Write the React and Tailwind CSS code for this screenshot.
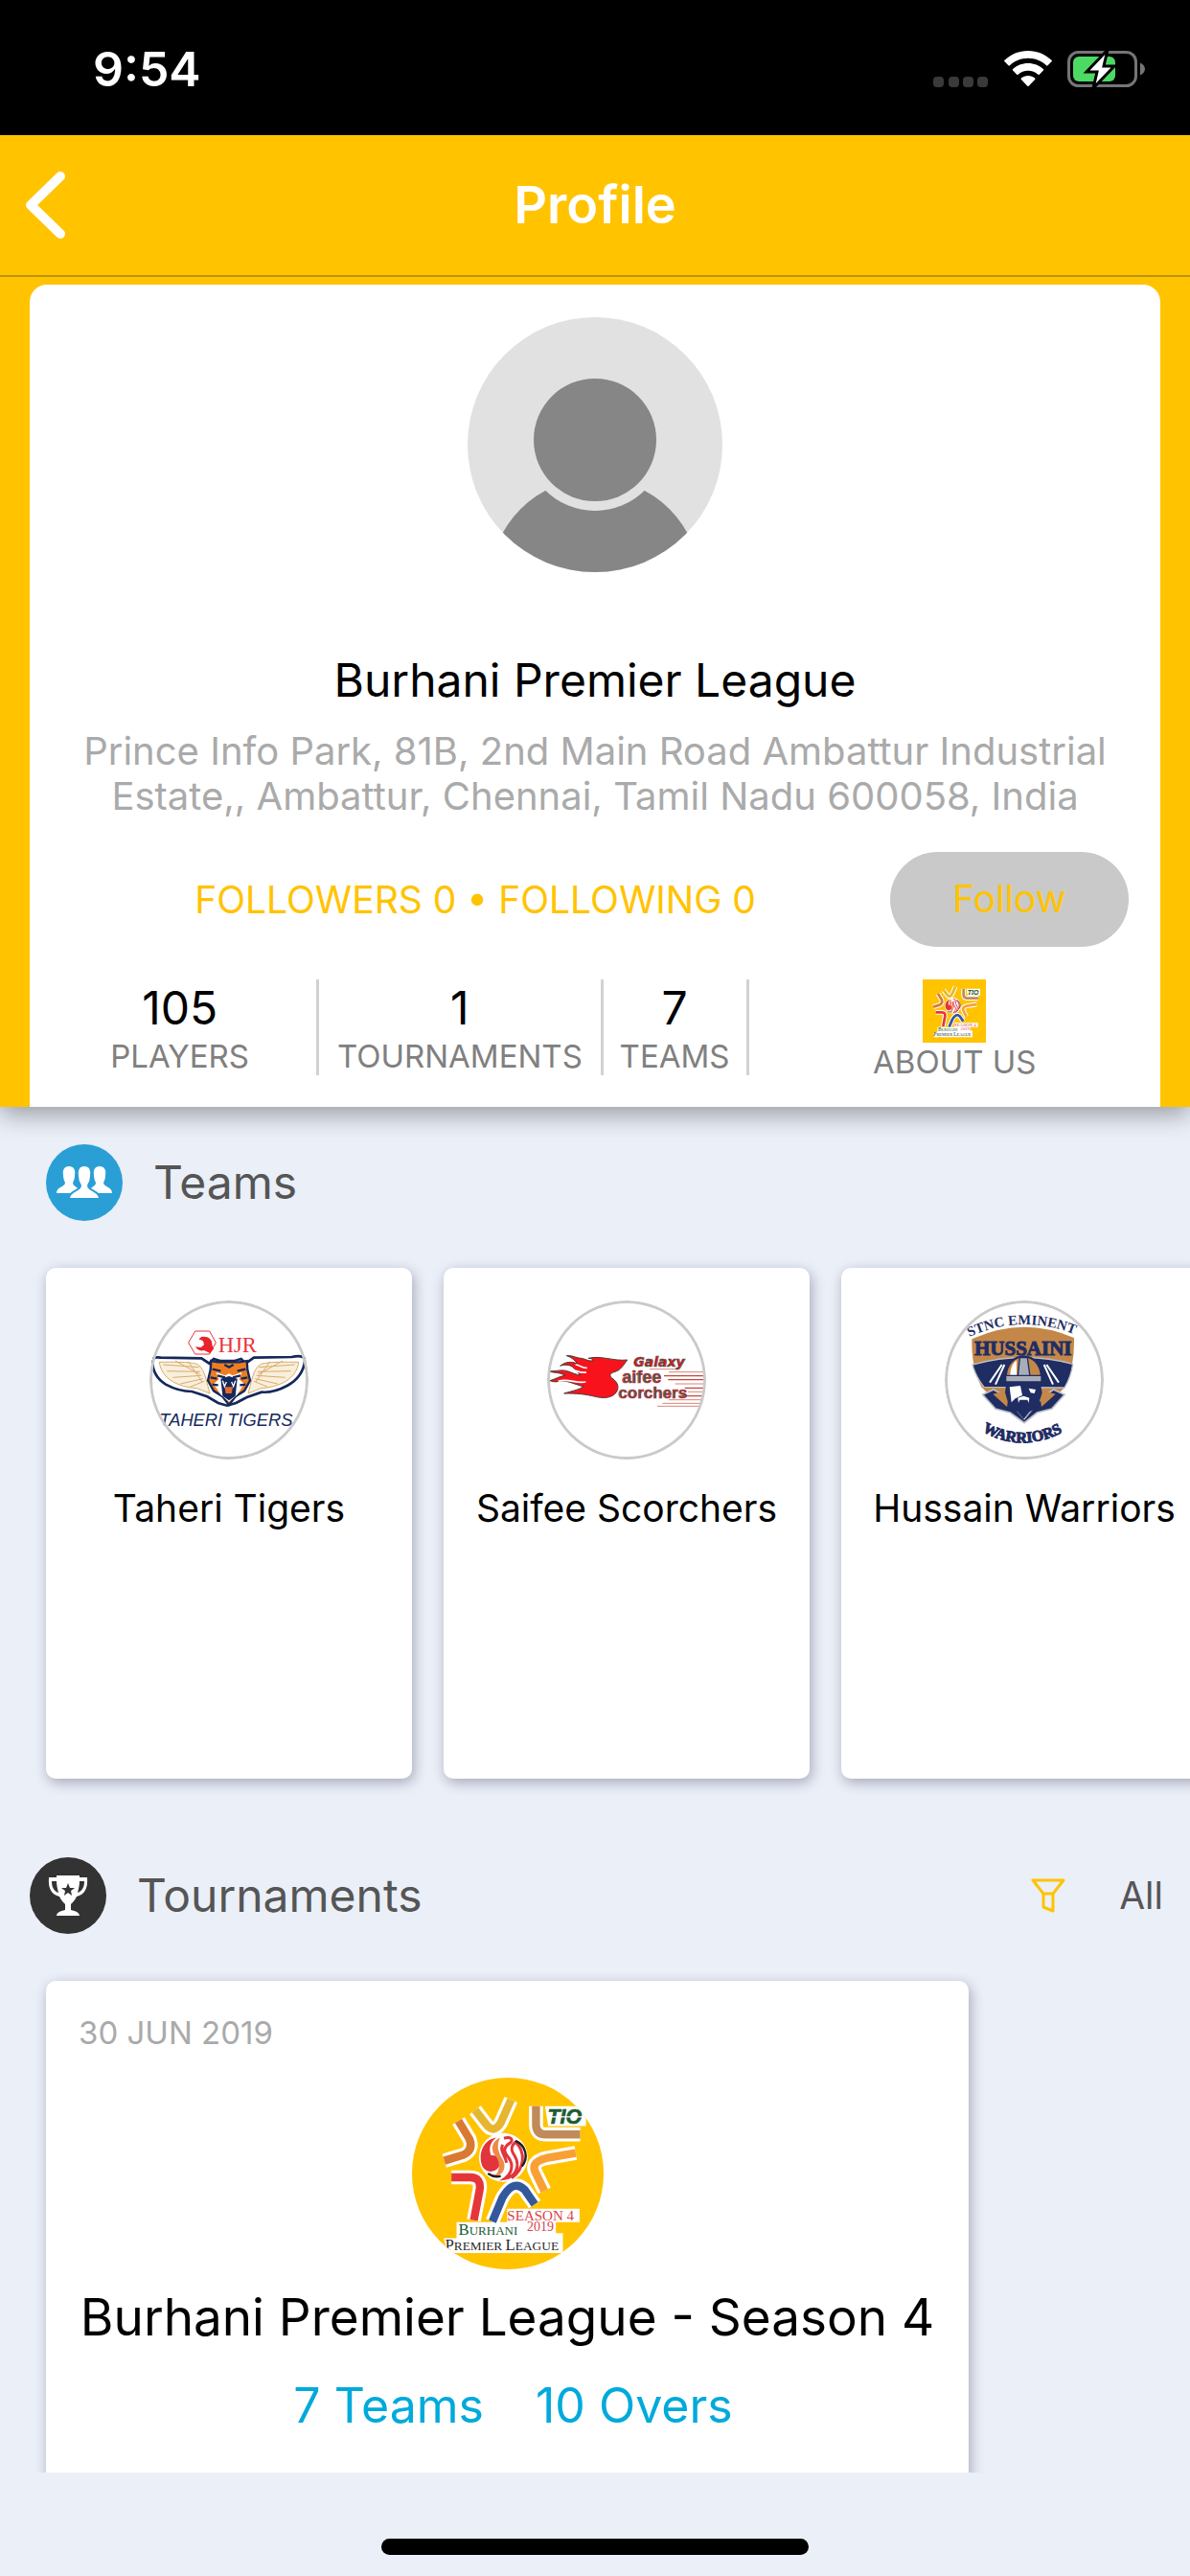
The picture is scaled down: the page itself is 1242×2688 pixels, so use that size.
import { useState } from 'react'

const stats = [
  { value: '105', label: 'PLAYERS' },
  { value: '1', label: 'TOURNAMENTS' },
  { value: '7', label: 'TEAMS' },
]

function StatusBar() {
  return (
    <div className="h-[141px] shrink-0 bg-black text-white flex items-start justify-between pt-10 pl-[97px] pr-[46px]">
      <span className="text-[50px] leading-[64px] font-semibold">9:54</span>
      <div className="flex items-center h-[64px] gap-4">
        <svg width="58" height="38" viewBox="0 0 58 38" fill="#3a3a3a">
          <rect x="0" y="27" width="11" height="11" rx="4" />
          <rect x="16" y="27" width="11" height="11" rx="4" />
          <rect x="31" y="27" width="11" height="11" rx="4" />
          <rect x="46" y="27" width="11" height="11" rx="4" />
        </svg>
        <svg width="50" height="38" viewBox="0 0 50 38" fill="#fff">
          <path d="M25 0C34.500 0 43 3.700 49.500 9.800a1 1 0 0 1 0 1.500L45.500 15.300a1 1 0 0 1-1.400 0C39 10.500 32.300 7.800 25 7.800S11 10.500 5.900 15.300a1 1 0 0 1-1.400 0L.5 11.300a1 1 0 0 1 0-1.500C7 3.700 15.500 0 25 0z" />
          <path d="M25 13C31.200 13 36.700 15.300 40.900 19.100a1 1 0 0 1 0 1.500L36.800 24.700a1 1 0 0 1-1.400 0C32.600 22.200 29 20.700 25 20.700S17.400 22.200 14.600 24.700a1 1 0 0 1-1.400 0L9.100 20.600a1 1 0 0 1 0-1.500C13.300 15.300 18.800 13 25 13z" />
          <path d="M25 26c2.700 0 5.200 1 7.100 2.600a1 1 0 0 1 0 1.500L25.700 36.700a1 1 0 0 1-1.400 0L17.900 30.100a1 1 0 0 1 0-1.500C19.800 27 22.300 26 25 26z" />
        </svg>
        <svg width="82" height="40" viewBox="0 0 82 40">
          <rect x="1.500" y="2.500" width="70" height="35" rx="10" fill="none" stroke="#757575" strokeWidth="3" />
          <path d="M76 13.500c3 1.200 5 3.700 5 6.500s-2 5.300-5 6.500z" fill="#757575" />
          <rect x="6" y="7" width="44" height="26" rx="6" fill="#4cd964" />
          <path d="M42 0L20 23h11l-4 17L49 17H38z" fill="#fff" stroke="#000" strokeWidth="3" />
        </svg>
      </div>
    </div>
  )
}

function TigersLogo() {
  return (
    <svg className="size-full" viewBox="49 51 498 498">
      <path d="M192 147h45l20 36-20 36h-45l-21-36z" fill="#fff" stroke="#e8343b" strokeWidth="3" />
      <path d="M212 165c18-4 34 6 33 24l5 14-12 13-18-9c-12 4-22-2-27-11l17 2 10-8-3-12-14-6z" fill="#e8242e" />
      <text x="264" y="214" fontFamily="'Liberation Serif', serif" fontSize="68" fill="#e8343b">HJR</text>
      <path d="M58 238c2-10 14-10 26-8l128 2 24 16 14-14 20 6h46l20-6 14 14 26-18 118-2c20-4 40-4 42 8-4 42-26 66-56 82-26 14-54 22-80 20l-46 16-34 18-28 8-28-8-34-20-48-16c-28 0-60-10-82-22-26-16-42-40-42-76z" fill="#fff" stroke="#14285a" strokeWidth="8" />
      <path d="M80 244c40 0 86-2 118 6 20 12 26 38 34 70l6 22-40-16c-60-4-112-30-118-82z" fill="#f8efdc" stroke="#d9ab6b" strokeWidth="3" />
      <path d="M516 244c-40 0-86-2-118 6-20 12-26 38-34 70l-6 22 40-16c60-4 112-30 118-82z" fill="#f8efdc" stroke="#d9ab6b" strokeWidth="3" />
      <g fill="none" stroke="#d9ab6b" strokeWidth="3">
        <path d="M92 252l112 8M104 272l104 2M122 292l90-6M146 312l70-16M176 322l44-18M130 240l76 42M170 242l44 64" />
        <path d="M504 252l-112 8M492 272l-104 2M474 292l-90-6M450 312l-70-16M420 322l-44-18M466 240l-76 42M426 242l-44 64" />
      </g>
      <path d="M242 240l22 4h66l24-4 2 28 8 34-18 32-28 18-20 26-20-26-28-18-18-32 8-34z" fill="#ee7d22" stroke="#14285a" strokeWidth="7" />
      <path d="M258 276l28 10 12-6 12 6 28-10-8 22 16 14-22 34-26 22-26-22-22-34 16-14z" fill="#fff" />
      <path d="M246 266l26 6M350 266l-26 6M240 292l20 4M356 292l-20 4M246 314l18 2M350 314l-18 2M284 252l14 8 14-8M262 286l24 6M334 286l-24 6" stroke="#14285a" strokeWidth="7" fill="none" />
      <path d="M272 296l26-8 26 8-6 54-20 14-20-14z" fill="#14285a" />
      <path d="M284 322h26l-4 20h-18z" fill="#e86a2c" />
      <path d="M278 302l6 18 6-14M318 302l-6 18-6-14" stroke="#fff" strokeWidth="4" fill="none" />
      <text x="80" y="444" fontFamily="'Liberation Sans', sans-serif" fontStyle="italic" fontSize="55" fill="#14285a">TAHERI TIGERS</text>
    </svg>
  )
}

function ScorchersLogo() {
  return (
    <svg className="size-full" viewBox="49 51 498 498">
      <g stroke="#c4473a" fill="none">
        <path d="M370 266h90M430 275h115M450 312h95M490 337h55" strokeWidth="2" />
        <path d="M415 287h130M428 299h117M480 325h65M470 350h70" strokeWidth="4" />
        <path d="M430 362h110M410 373h126M394 382h136" strokeWidth="2" />
      </g>
      <path d="M300 237c-12 16-20 32-38 37-16 4-20 12-10 20 18 12 24 28 14 44-14 20-44 20-66 14-32-8-56-10-98-10 24-8 46-10 62-22-26-4-54-22-78-16-14 4-20 0-28-2 20-6 30-14 48-16-20-12-32-6-52-14 24 2 38-6 58 0 16 4 24 12 42 12-14-10-20-26-36-30-12-2-20-2-28 2 16-14 34-14 54-8-10-10-18-20-34-24 20-2 30 8 46 8 14 2 26 12 38 6-4-4-8-6-16-6 40-10 80 10 122 5z" fill="#f8131c" stroke="#4b3b36" strokeWidth="3" />
      <path d="M110 268c22-4 38 12 62 8M84 304c30-10 56 8 86 2M138 252c14 0 20 12 36 10" stroke="#fff" strokeWidth="5" fill="none" />
      <g fontFamily="'Liberation Sans', sans-serif" fontWeight="700">
        <text x="320" y="259" fontFamily="'DejaVu Sans', sans-serif" fontSize="42" fontStyle="italic" fill="#e8131c" stroke="#3b5a50" strokeWidth="2">Galaxy</text>
        <text x="284" y="309" fontSize="54" fill="#2f6458" stroke="#d8202a" strokeWidth="2">aifee</text>
        <text x="272" y="358" fontSize="51" fill="#2f6458" stroke="#d8202a" strokeWidth="2">corchers</text>
      </g>
    </svg>
  )
}

function WarriorsLogo() {
  return (
    <svg className="size-full" viewBox="49 51 498 498">
      <defs>
        <path id="arc-top" d="M126 165Q296 88 472 164" />
        <path id="arc-low" d="M166 460Q296 534 430 456" />
      </defs>
      <path d="M134 172Q294 98 454 168Q456 260 426 322L404 344L298 432L186 344L164 322Q132 260 134 172z" fill="#c48747" />
      <path d="M136 252Q296 208 450 250Q444 292 424 324L172 322Q146 290 136 252z" fill="#1f2d63" stroke="#b9bec9" strokeWidth="4" />
      <path d="M208 314l28-62M190 308l38-56M388 314l-28-62M406 308l-38-56" stroke="#fff" strokeWidth="6" />
      <path d="M168 346l34-16 38 22 58 70 58-70 34-22 34 16-40 44-46 12-40 32-44-32-46-12z" fill="#1f2d63" stroke="#b9bec9" strokeWidth="5" />
      <path d="M200 344l44 40 8-54zM396 344l-44 40-8-54z" fill="#c48747" />
      <path d="M240 292c0-38 24-66 56-66s56 28 56 66z" fill="#c48747" stroke="#1f2d63" strokeWidth="7" />
      <path d="M254 288c0-22 6-38 20-50v50z" fill="#fff" />
      <path d="M284 230h24l8 60h-38z" fill="#a8aeb9" stroke="#1f2d63" strokeWidth="4" />
      <path d="M242 306h106l6 34-14 46-26 14-18 22-18-22-26-14-14-46z" fill="#1f2d63" />
      <path d="M240 286h112v20H240z" fill="#a8aeb9" stroke="#1f2d63" strokeWidth="4" />
      <path d="M252 322l34-4 6 30-22 10-12 12zM312 326l22 4-4 12-12-2zM278 356l18-6 18 6-2 16-4-10h-24l-4 10z" fill="#fff" />
      <g fontFamily="'Liberation Serif', serif" fontWeight="700" fill="#1f2d63">
        <text fontSize="44"><textPath href="#arc-top">STNC EMINENT</textPath></text>
        <text x="142" y="222" fontSize="63" stroke="#1f2d63" strokeWidth="3">HUSSAINI</text>
        <text fontSize="48" stroke="#1f2d63" strokeWidth="3"><textPath href="#arc-low">WARRIORS</textPath></text>
      </g>
    </svg>
  )
}

function LeagueLogo({ className }) {
  return (
    <svg className={className} viewBox="59 53 598 598">
      <rect x="59" y="53" width="598" height="598" fill="#ffc300" />
      <g fill="none" stroke="#fff" strokeWidth="44" strokeLinejoin="round">
        <path d="M256 154l34 44q24 32 46-4l32-72" />
        <path d="M204 188l34 56q14 34-18 50l-60 18" />
        <path d="M446 142v60q2 28 30 28h108" />
        <path d="M570 288l-92 16q-50 12-34 44l28 58" />
        <path d="M182 364h58q36 0 30 40l-18 94" />
        <path d="M310 502l30-72q34-62 70-28l32 46" />
      </g>
      <circle cx="344" cy="302" r="76" fill="#fff" />
      <path d="M356 462h226v42h-74v34h22v62H170l-12-46h40v-50h158z" fill="#fff" />
      <path d="M474 142h128v62H484z" fill="#fff" />
      <g fill="none" strokeWidth="25" strokeLinejoin="round">
        <path d="M256 154l34 44q24 32 46-4l32-72" stroke="#e5b62f" />
        <path d="M204 188l34 56q14 34-18 50l-60 18" stroke="#d97a32" />
        <path d="M446 142v60q2 28 30 28h108" stroke="#c28a58" />
        <path d="M570 288l-92 16q-50 12-34 44l28 58" stroke="#f9a035" />
        <path d="M182 364h58q36 0 30 40l-18 94" stroke="#e63539" />
        <path d="M310 502l30-72q34-62 70-28l32 46" stroke="#34589c" />
      </g>
      <path d="M322 240c-40 6-58 50-44 88 12 24 40 22 52 4 10-20-4-40-24-36-10-24 0-44 16-56z" fill="#e2343b" />
      <path d="M334 240c-30 14-30 44-12 60 14 20 10 50-6 60 26 0 40-26 26-52-18-28-18-46-8-68z" fill="#ee8a4a" />
      <path d="M346 242c18-6 32 2 20 14-20 12-24 26-6 46 18 24 10 50-12 66 34-4 50-40 32-70-16-22-10-34 2-44 32 30 30 84-12 112M342 262c-10 20 8 32 12 56" fill="none" stroke="#e2343b" strokeWidth="9" />
      <path d="M382 250c32 14 42 52 20 80M296 352c14 10 26 12 40 8" stroke="#221e1f" strokeWidth="7" fill="none" />
      <text x="482" y="197" fontFamily="'Liberation Sans', sans-serif" fontWeight="700" fontStyle="italic" fontSize="64" fill="#1c5a35" stroke="#1c5a35" strokeWidth="2">TIO</text>
      <path d="M482 175h116" stroke="#fff" strokeWidth="4" />
      <g fontFamily="'Liberation Serif', serif">
        <text x="356" y="500" fontSize="45" fill="#d8444a">SEASON 4</text>
        <text x="418" y="531" fontSize="42" fill="#d8444a">2019</text>
        <text x="204" y="543" fill="#1c5a35" fontSize="50">B<tspan fontSize="39">URHANI</tspan></text>
        <text x="162" y="590" fill="#2b2b2b" fontSize="50">P<tspan fontSize="40">REMIER </tspan>L<tspan fontSize="40">EAGUE</tspan></text>
      </g>
    </svg>
  )
}

const teams = [
  { name: 'Taheri Tigers', Logo: TigersLogo },
  { name: 'Saifee Scorchers', Logo: ScorchersLogo },
  { name: 'Hussain Warriors', Logo: WarriorsLogo },
]

function Avatar() {
  return (
    <svg className="size-[266px]" viewBox="0 0 266 266">
      <defs>
        <clipPath id="avatar-clip"><circle cx="133" cy="133" r="133" /></clipPath>
      </defs>
      <g clipPath="url(#avatar-clip)">
        <rect width="266" height="266" fill="#e1e1e1" />
        <circle cx="133" cy="278" r="110" fill="#868686" />
        <circle cx="133" cy="128" r="74" fill="#e1e1e1" />
        <circle cx="133" cy="128" r="64" fill="#868686" />
      </g>
    </svg>
  )
}

function ProfileCard() {
  const [following, setFollowing] = useState(false)

  return (
    <section className="relative z-10 bg-[#ffc300] pt-2 px-[31px] shadow-[0_8px_24px_rgba(0,0,0,0.35)]">
      <div className="bg-white rounded-t-[18px] pt-[34px] pb-[27px]">
        <div className="flex justify-center"><Avatar /></div>
        <h2 className="mt-[83px] text-center text-[48px] leading-[60px] text-black">Burhani Premier League</h2>
        <p className="mt-5 px-10 text-center text-[40px] leading-[47px] text-[#aaaaaa]">
          Prince Info Park, 81B, 2nd Main Road Ambattur Industrial Estate,, Ambattur, Chennai, Tamil Nadu 600058, India
        </p>
        <div className="mt-[35px] pl-8 pr-[33px] flex items-center">
          <p className="flex-1 text-center text-[39px] leading-[50px] text-[#ffc300]">FOLLOWERS 0 • FOLLOWING 0</p>
          <button
            className="w-[249px] h-[99px] rounded-full bg-[#c9c9c9] text-[39px] text-[#ffc300]"
            aria-pressed={following}
            onClick={() => setFollowing(!following)}
          >
            Follow
          </button>
        </div>
        <div className="mt-[34px] pl-[14px] grid grid-cols-[288fr_296fr_152fr_429fr] items-start text-center">
          {stats.map(s => (
            <div key={s.label} className="h-[100px] border-r-3 border-[#d2d2d2]">
              <p className="text-[48px] leading-[60px] text-black">{s.value}</p>
              <p className="text-[33px] leading-[40px] text-[#808080]">{s.label}</p>
            </div>
          ))}
          <button className="flex flex-col items-center">
            <LeagueLogo className="size-[66px]" />
            <span className="text-[33px] leading-[40px] text-[#808080]">ABOUT US</span>
          </button>
        </div>
      </div>
    </section>
  )
}

function TeamsIcon() {
  return (
    <svg className="size-[80px]" viewBox="0 0 80 80">
      <circle cx="40" cy="40" r="40" fill="#2a9fd6" />
      <g fill="#fff">
        <path d="M24 23c5 0 7 4 6 9 0 4-1 6-2 8 0 5 8 5 9 11H11c0-7 9-6 9-11-1-2-2-4-2-8-1-5 1-9 6-9z" />
        <path d="M56 23c5 0 7 4 6 9 0 4-1 6-2 8 0 5 9 4 9 11H43c1-6 9-6 9-11-1-2-2-4-2-8-1-5 1-9 6-9z" />
        <path d="M40 22c6 0 8 5 7 11 0 4-1 7-3 10 0 6 12 5 12 14H24c0-9 12-8 12-14-2-3-3-6-3-10-1-6 1-11 7-11z" stroke="#2a9fd6" strokeWidth="2" />
      </g>
    </svg>
  )
}

function TrophyIcon() {
  return (
    <svg className="size-[80px]" viewBox="0 0 80 80">
      <circle cx="40" cy="40" r="40" fill="#333" />
      <path d="M28 19h24v2h8c1 12-3 18-11 20-2 4-4 6-6 8v6c5 1 9 3 9 6H28c0-3 4-5 9-6v-6c-2-2-4-4-6-8-8-2-12-8-11-20h8zM28 25h-5c0 6 2 10 7 12-1-4-2-8-2-12zM52 25c0 4-1 8-2 12 5-2 7-6 7-12z" fill="#fff" />
      <path d="M40 27l2 5h5l-4 3 1 5-4-3-4 3 1-5-4-3h5z" fill="#333" />
    </svg>
  )
}

function App() {
  return (
    <div className="h-screen flex flex-col overflow-hidden bg-[#ebeff8] font-['Inter',sans-serif]">
      <StatusBar />
      <header className="shrink-0 h-[148px] grid grid-cols-3 items-center bg-[#ffc300] border-b-2 border-[#bd9208]">
        <button className="justify-self-start pl-[26px]" aria-label="Back">
          <svg width="43" height="70" viewBox="0 0 43 70" fill="none" stroke="#fff" strokeWidth="10" strokeLinecap="round" strokeLinejoin="round">
            <path d="M37 5L6 35l31 30" />
          </svg>
        </button>
        <h1 className="text-center text-[54px] leading-[64px] font-semibold text-white">Profile</h1>
      </header>

      <main className="flex-1 min-h-0 overflow-x-hidden overflow-y-auto [scrollbar-width:none]">
        <ProfileCard />

        <section>
          <div className="pt-[39px] px-12 flex items-center gap-8">
            <TeamsIcon />
            <h2 className="text-[48px] leading-[60px] text-[#555555]">Teams</h2>
          </div>
          <div className="mt-[29px] pt-5 pb-10 px-12 flex gap-[33px] overflow-x-auto [scrollbar-width:none]">
            {teams.map(({ name, Logo }) => (
              <div key={name} className="shrink-0 w-[382px] h-[533px] pt-[34px] flex flex-col items-center bg-white rounded-[10px] shadow-[2px_4px_14px_rgba(0,0,40,0.3)]">
                <div className="relative size-[166px] rounded-full overflow-hidden">
                  <Logo />
                  <div className="absolute inset-0 rounded-full border-3 border-[#cacaca]" />
                </div>
                <p className="mt-[26px] whitespace-nowrap text-[39px] leading-[50px] text-black">{name}</p>
              </div>
            ))}
          </div>
        </section>

        <section>
          <div className="mt-[42px] pl-[31px] pr-7 flex items-center">
            <TrophyIcon />
            <h2 className="ml-8 flex-1 text-[48px] leading-[60px] text-[#555555]">Tournaments</h2>
            <button aria-label="Filter">
              <svg width="36" height="36" viewBox="0 0 36 36" fill="none" stroke="#ffc300" strokeWidth="3" strokeLinejoin="round">
                <path d="M2 2h32L23 16H13zM13 16v14l10 4V16" />
              </svg>
            </button>
            <button className="ml-14 text-[39px] leading-[50px] text-[#555555]">All</button>
          </div>
          <article className="mt-[49px] ml-12 w-[963px] max-w-full px-[34px] pt-[34px] pb-24 bg-white rounded-[10px] shadow-[2px_4px_14px_rgba(0,0,40,0.3)]">
            <p className="text-[33px] leading-[40px] text-[#aaaaaa]">30 JUN 2019</p>
            <div className="mt-[27px] flex justify-center">
              <LeagueLogo className="size-[200px] rounded-full" />
            </div>
            <h3 className="mt-[18px] text-center whitespace-nowrap text-[53px] leading-[64px] text-black">Burhani Premier League - Season 4</h3>
            <div className="mt-[30px] pl-3 flex justify-center gap-[54px] text-[50px] leading-[60px] text-[#00aadb]">
              <span>7 Teams</span>
              <span>10 Overs</span>
            </div>
          </article>
        </section>
      </main>

      <footer className="shrink-0 h-[108px] flex justify-center items-end pb-[22px]">
        <div className="w-[446px] h-[17px] rounded-full bg-black" />
      </footer>
    </div>
  )
}

export default App
